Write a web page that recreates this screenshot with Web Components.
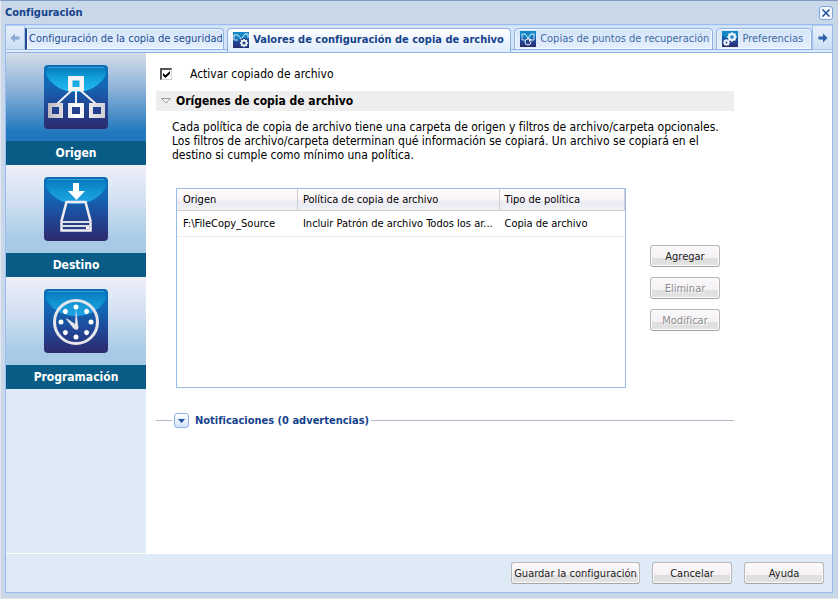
<!DOCTYPE html>
<html lang="es">
<head>
<meta charset="utf-8">
<title>Configuración</title>
<style>
html, body { height: 100%; }
body { margin: 0; font: 11px/14px "DejaVu Sans Condensed", "Noto Sans", sans-serif; color: #000; }
</style>
</head>
<body>
<config-window heading="Configuración">
  <tab-strip slot="tabs">
    <strip-tab style="--basis:200px" clipped>Configuración de la copia de seguridad</strip-tab>
    <strip-tab style="--basis:285px" icon="copy-gear" active>Valores de configuración de copia de archivo</strip-tab>
    <strip-tab style="--basis:200px" icon="copy-loop">Copias de puntos de recuperación</strip-tab>
    <strip-tab style="--basis:96px" icon="gears">Preferencias</strip-tab>
  </tab-strip>
  <side-nav slot="nav">
    <nav-item icon="tree" selected>Origen</nav-item>
    <nav-item icon="drive">Destino</nav-item>
    <nav-item icon="clock">Programación</nav-item>
  </side-nav>
  <check-field checked>Activar copiado de archivo</check-field>
  <fold-section heading="Orígenes de copia de archivo">
    <p slot="intro">Cada política de copia de archivo tiene una carpeta de origen y filtros de archivo/carpeta opcionales. Los filtros de archivo/carpeta determinan qué información se copiará. Un archivo se copiará en el destino si cumple como mínimo una política.</p>
    <policy-grid></policy-grid>
    <action-button slot="actions">Agregar</action-button>
    <action-button slot="actions" disabled>Eliminar</action-button>
    <action-button slot="actions" disabled>Modificar</action-button>
  </fold-section>
  <notice-bar>Notificaciones (0 advertencias)</notice-bar>
  <action-button slot="footer" style="--width:129px">Guardar la configuración</action-button>
  <action-button slot="footer" style="--width:80px">Cancelar</action-button>
  <action-button slot="footer" style="--width:80px">Ayuda</action-button>
</config-window>

<script>
const base = '*{box-sizing:border-box}button{font:inherit;color:inherit;margin:0;padding:0;border:0;background:none}';

class Base extends HTMLElement {
  connectedCallback() {
    if (this.shadowRoot) return;
    const t = document.createElement('template');
    t.innerHTML = `<style>${base}${this.css()}</style>${this.html()}`;
    this.attachShadow({ mode: 'open' }).append(t.content.cloneNode(true));
  }
}

const defs = `<defs>
  <linearGradient id="b" x2="0" y2="1"><stop stop-color="#0d6fb8"/><stop offset=".3" stop-color="#1168b5"/><stop offset=".6" stop-color="#1f4a9b"/><stop offset="1" stop-color="#2e2a6e"/></linearGradient>
  <linearGradient id="g" x2="0" y2="1"><stop stop-color="#0a79bf"/><stop offset=".5" stop-color="#12a5dd"/><stop offset="1" stop-color="#27b9f5"/></linearGradient>
  <linearGradient id="w" gradientUnits="userSpaceOnUse" x1="4" x2="61"><stop stop-color="#b9b9c0"/><stop offset=".5" stop-color="#fff"/><stop offset="1" stop-color="#cfcfd6"/></linearGradient>
</defs>`;
const tile = gloss => `<rect width="64" height="64" rx="4" fill="url(#b)"/><path d="M2 6Q2 2 6 2H58Q62 2 62 6V10Q52 27 32 27T2 10Z" fill="url(#g)" opacity="${gloss}"/><path d="M4 2.500H60" stroke="#45b5e0" opacity=".7"/>`;
const gear = (cx, cy, r, ring) => {
  let s = '';
  for (let a = 0; a < 360; a += 45) s += `<rect x="${cx - .8}" y="${cy - r - .8}" width="1.600" height="2" transform="rotate(${a} ${cx} ${cy})" fill="#eef3f8"/>`;
  return s + `<circle cx="${cx}" cy="${cy}" r="${r - ring / 2}" fill="none" stroke="#eef3f8" stroke-width="${ring}"/>`;
};
const small = `<rect width="16" height="16" fill="url(#b)"/><path d="M0 0H16V4Q8 11 0 4Z" fill="#1488c6"/>`;
const dots = [0, 45, 90, 135, 180, 225, 270, 315].map(a => `<circle cx="32" cy="18" r="2.500" fill="#fff" transform="rotate(${a} 32 33)"/>`).join('');
const ICONS = {
  tree: [64, tile(1) + `<g stroke="#f2f2f4" stroke-width="2"><path d="M28 25L13 39M36 25L52 39M32 25V40"/></g>
    <path d="M24 11H40V26H24ZM28.500 15.500V22H35.500V15.500Z" fill="#f4f4f6" fill-rule="evenodd"/>
    <path d="M4 38H19V53H4ZM8 42V49H15V42ZM24 38H40V53H24ZM28 42V49H36V42ZM45 38H61V53H45ZM49 42V49H57V42Z" fill="url(#w)" fill-rule="evenodd"/>`],
  drive: [64, tile(.75) + `<path d="M29 6H35V14H41L32.500 23L24 14H29Z" fill="#fff"/>
    <path d="M22.500 25H41.500L46.500 44V53.500H17.500V44Z" fill="none" stroke="#eeeef2" stroke-width="2.500"/>
    <path d="M17 45H47M17 49H47" stroke="#dedee5" stroke-width="2"/><path d="M42 50H45V52H42Z" fill="#fff"/>`],
  clock: [64, tile(.75) + `<circle cx="32" cy="33" r="21.500" fill="none" stroke="#e5e5ea" stroke-width="3"/>${dots}
    <path d="M32 20L34.500 39L33 41L30 40L22 30L23 29.500L31 35Z" fill="#e3e3ea"/>`],
  'copy-gear': [16, small + `<path d="M1 3H5L10 9M15 2H12L7 9M1 3V8H5M15 2V6" fill="none" stroke="#d8ebf8"/><circle cx="11" cy="11" r="5" fill="#27438b"/>` + gear(11, 11, 3.2, 1.6)],
  'copy-loop': [16, small + `<path d="M2 3V9H5M14 3V9H11M2 3H5L9 8M14 3H11L7 8" fill="none" stroke="#cfe6f6"/><circle cx="8" cy="11" r="3" fill="#24438d" stroke="#e8f1f8" stroke-dasharray="15 3"/><path d="M9 7L12 9L9 11Z" fill="#e8f1f8"/>`],
  gears: [16, small + gear(10, 6, 4, 2.2) + gear(4.5, 11.500, 2.6, 1.6)],
};

customElements.define('app-icon', class extends Base {
  css() { const n = ICONS[this.getAttribute('name')][0]; return `:host{display:block;flex:none;width:${n}px;height:${n}px}svg{display:block}`; }
  html() { const [n, body] = ICONS[this.getAttribute('name')]; return `<svg width="${n}" height="${n}" viewBox="0 0 ${n} ${n}" aria-hidden="true">${defs}${body}</svg>`; }
});

customElements.define('config-window', class extends Base {
  css() { return `
    :host{display:flex;flex-direction:column;min-height:100%;box-sizing:border-box;border-top:1px solid #8099c2;border-right:1px solid #c4d0df;border-bottom:1px solid #e4e8ee;border-left:1px solid #e4e8ee;background:#c8d8e8;padding:0 4px 5px}
    header{display:flex;align-items:center;justify-content:space-between;height:23px}
    h1{margin:0;font-size:11px;font-weight:bold;color:#15428b}
    .close{display:grid;place-items:center;width:14px;height:14px;border:1px solid #7ea6dd;border-radius:3px;background:#f2f7fd}
    .frame{flex:1;display:flex;flex-direction:column;border:1px solid #99bbf3;background:#deeaf6}
    .body{flex:1;display:flex}
    main{flex:1;min-width:0;background:#fff;padding:13px 98px 0 10px}
    footer{display:flex;justify-content:flex-end;gap:12px;padding:8px;border-top:1px solid #fff}`; }
  html() { return `
    <header><h1>${this.getAttribute('heading')}</h1>
      <button class="close" aria-label="Cerrar"><svg width="8" height="8" viewBox="0 0 8 8"><path d="M.5 .5L7.500 7.500M7.500 .5L.5 7.500" stroke="#1f4b9c" stroke-width="1.500"/></svg></button></header>
    <div class="frame"><slot name="tabs"></slot>
      <div class="body"><slot name="nav"></slot><main><slot></slot></main></div>
      <footer><slot name="footer"></slot></footer></div>`; }
});

customElements.define('tab-strip', class extends Base {
  css() { return `
    :host{display:flex;height:28px;background:linear-gradient(#cfddf1 0 1px,#d5e4f6 1px 24px,#8db2e3 24px 25px,#deecfd 25px);border-bottom:1px solid #8db2e3;box-sizing:border-box}
    .tabs{display:flex;flex:1;min-width:0;gap:3px;padding-top:3px;margin-bottom:-1px}
    .scroll{width:19px;height:25px;flex:none;display:grid;place-items:center;background:linear-gradient(#e6effa,#cddff5);border:1px solid #a5c2ea;border-top-color:#b6cdec;margin-top:0}
    .off{border-left:0}.on{border-right:0;width:20px}.off svg{opacity:.45}`; }
  html() {
    const arrow = d => `<svg width="10" height="10" viewBox="0 0 10 10"><path d="${d}" fill="#2c5fa8"/></svg>`;
    return `<button class="scroll off" disabled aria-label="Anterior">${arrow('M5 .5V3.500H9.500V6.500H5V9.500L.5 5Z')}</button>
    <div class="tabs" role="tablist"><slot></slot></div>
    <button class="scroll on" aria-label="Siguiente">${arrow('M5 .5V3.500H.5V6.500H5V9.500L9.500 5Z')}</button>`; }
});

customElements.define('strip-tab', class extends Base {
  css() {
    const on = this.hasAttribute('active'), cut = this.hasAttribute('clipped');
    return `
    :host{display:block;flex:0 1 var(--basis);min-width:0}
    button{display:flex;align-items:center;gap:4px;width:100%;height:22px;padding:0 0 0 5px;white-space:nowrap;
      border:1px solid #8db2e3;border-radius:4px 4px 0 0;box-shadow:inset 0 0 0 1px #f3f8ff;
      color:${on ? '#15428b' : cut ? '#1c4d93' : '#416aa3'};font-weight:${on ? 'bold' : 'normal'};
      background:${on ? 'linear-gradient(#fff,#deecfd)' : 'linear-gradient(#d3e4f9,#e6f0fd)'}}
    ${on ? 'button{height:24px;border-bottom:0;padding-bottom:1px;box-shadow:none}' : ''}
    ${cut ? 'button{padding-left:2px;border-left:2px solid #1f4a94;border-radius:0 4px 0 0}' : ''}`; }
  html() {
    const i = this.getAttribute('icon');
    return `<button role="tab" aria-selected="${this.hasAttribute('active')}">${i ? `<app-icon name="${i}"></app-icon>` : ''}<span><slot></slot></span></button>`; }
});

customElements.define('side-nav', class extends Base {
  css() { return ':host{display:block;flex:none;width:140px}nav{display:flex;flex-direction:column}'; }
  html() { return '<nav><slot></slot></nav>'; }
});

customElements.define('nav-item', class extends Base {
  css() { return `
    :host{display:block}
    button{display:block;width:100%}
    .art{display:grid;place-items:center;height:88px;background:${this.hasAttribute('selected') ? 'linear-gradient(#d5dde8,#8db3d9 40%,#2178be 90%)' : 'linear-gradient(#efeff9,#d3e1f2 40%,#a7cae6 85%)'}}
    .label{display:block;height:24px;line-height:24px;background:#085c85;color:#fff;font-weight:bold;font-size:12px}`; }
  html() { return `<button><span class="art"><app-icon name="${this.getAttribute('icon')}"></app-icon></span><span class="label"><slot></slot></span></button>`; }
});

customElements.define('check-field', class extends Base {
  css() { return `
    :host{display:block;margin-left:4px;font-size:12px}
    label{display:flex;align-items:center;gap:18px;height:16px}
    input{appearance:none;width:12px;height:12px;margin:0;border:1px solid #d4d0c8;border-top:2px solid #555;border-left:2px solid #555;background:#fff;display:grid;place-items:center}
    input:checked::before{content:"";width:7px;height:7px;background:#000;clip-path:polygon(0 30%,35% 62%,100% 0,100% 38%,35% 100%,0 68%)}`; }
  html() { return `<label><input type="checkbox" ${this.hasAttribute('checked') ? 'checked' : ''}><span><slot></slot></span></label>`; }
});

customElements.define('fold-section', class extends Base {
  css() { return `
    :host{display:block;margin-top:9px}
    h2{margin:0;background:#eee;height:20px}
    h2 button{display:flex;align-items:center;gap:5px;width:100%;height:20px;padding-left:5px;font-size:12px;font-weight:bold}
    .intro{padding:9px 0 0 16px;font-size:12px}
    ::slotted(p){margin:0}
    .work{display:flex;gap:24px;padding:26px 14px 0 20px}
    .grid{flex:1;min-width:0;display:grid}
    .actions{display:flex;flex-direction:column;gap:10px;padding-top:57px}`; }
  html() { return `
    <h2><button aria-expanded="true"><svg width="10" height="6" viewBox="0 0 10 6"><path d="M.5 .5H9.500L5 5Z" fill="#f4f4f4" stroke="#999"/></svg>${this.getAttribute('heading')}</button></h2>
    <div class="intro"><slot name="intro"></slot></div>
    <div class="work"><div class="grid"><slot></slot></div><div class="actions"><slot name="actions"></slot></div></div>`; }
});

customElements.define('policy-grid', class extends Base {
  css() { return `
    :host{display:block;border:1px solid #99bbe8;min-height:200px;box-sizing:border-box}
    table{width:100%;table-layout:fixed;border-collapse:separate;border-spacing:0}
    th,td{text-align:left;font-weight:normal;padding:0 0 0 6px;white-space:nowrap;overflow:hidden}
    th{height:22px;background:linear-gradient(#fefbfc,#faf5f8 50%,#ebecf3 60%,#eff0f6);border-right:1px solid #d0d0d0;border-bottom:1px solid #d0d0d0}
    td{height:26px;border-bottom:1px solid #ededed}
    th:nth-child(1){width:27%}th:nth-child(2){width:45%}
    th:nth-child(n+2),td:nth-child(n+2){padding-left:5px}`; }
  html() { return `<table>
    <thead><tr><th scope="col">Origen</th><th scope="col">Política de copia de archivo</th><th scope="col">Tipo de política</th></tr></thead>
    <tbody><tr><td>F:\\FileCopy_Source</td><td>Incluir Patrón de archivo Todos los ar...</td><td>Copia de archivo</td></tr></tbody></table>`; }
});

customElements.define('action-button', class extends Base {
  css() { return `
    :host{display:block;width:var(--width,70px)}
    button{display:block;width:100%;height:22px;padding-top:2px;border:1px solid #b9b7b9;border-bottom-color:#a5a5a5;border-radius:3px;color:#222;white-space:nowrap;
      background:linear-gradient(#fbf8fa,#f5f1f5 12px,#dedede 12px,#e3e3e3);box-shadow:inset 0 0 0 1px #faf8fa}
    button:disabled{color:#8c8c8c;text-shadow:1px 1px #fff}`; }
  html() { return `<button ${this.hasAttribute('disabled') ? 'disabled' : ''}><slot></slot></button>`; }
});

customElements.define('notice-bar', class extends Base {
  css() { return `
    :host{display:flex;align-items:center;margin-top:25px;gap:2px;color:#15428b}
    :host::before{content:"";width:16px;border-top:1px solid #b5b8c8}
    :host::after{content:"";flex:1;border-top:1px solid #b5b8c8}
    button{display:flex;align-items:center;gap:6px;font-weight:bold}
    .mark{display:grid;place-items:center;width:15px;height:15px;border:1px solid #8fb2ea;border-radius:3px;background:linear-gradient(#fff,#d3e3f8)}`; }
  html() { return '<button aria-expanded="false"><span class="mark"><svg width="7" height="4" viewBox="0 0 7 4"><path d="M0 0H7L3.500 4Z" fill="#1f4fa8"/></svg></span><slot></slot></button>'; }
});
</script>
</body>
</html>
